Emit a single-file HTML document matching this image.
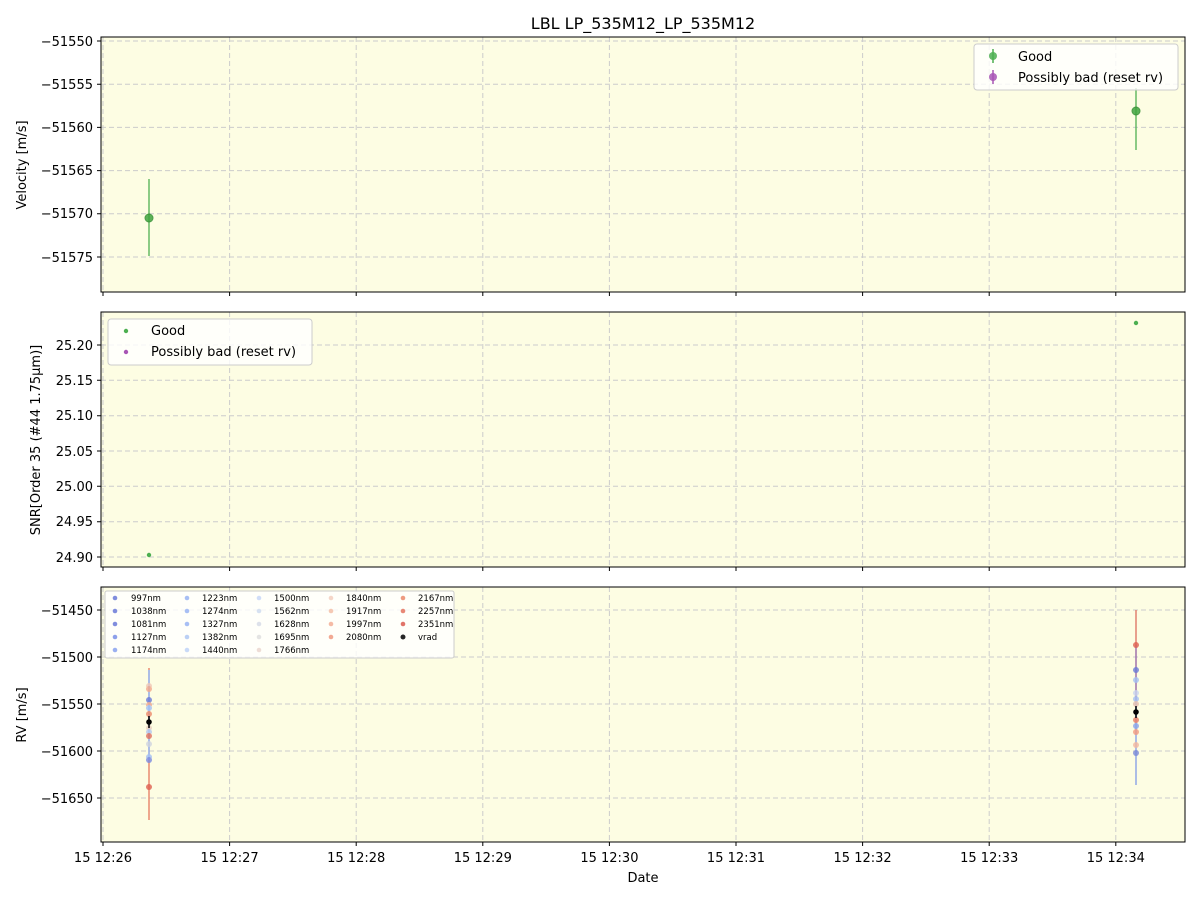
<!DOCTYPE html>
<html><head><meta charset="utf-8"><style>
body{margin:0;background:#fff}
svg{display:block;font-family:"DejaVu Sans","Liberation Sans",sans-serif}
</style></head><body>
<svg width="1200" height="900" viewBox="0 0 1200 900" xmlns="http://www.w3.org/2000/svg">
<rect width="1200" height="900" fill="#fff"/>
<text x="643" y="29" font-size="16" text-anchor="middle">LBL LP_535M12_LP_535M12</text>

<!-- panel backgrounds -->
<rect x="101" y="37" width="1084" height="255" fill="#fdfde3"/>
<rect x="101" y="312" width="1084" height="255" fill="#fdfde3"/>
<rect x="101" y="587" width="1084" height="255" fill="#fdfde3"/>

<g stroke="#cccccc" stroke-dasharray="5,3" stroke-width="1">
<!-- vertical grid -->
<path d="M103 37V292M229.6 37V292M356.2 37V292M482.8 37V292M609.4 37V292M736 37V292M862.6 37V292M989.2 37V292M1115.8 37V292"/>
<path d="M103 312V567M229.6 312V567M356.2 312V567M482.8 312V567M609.4 312V567M736 312V567M862.6 312V567M989.2 312V567M1115.8 312V567"/>
<path d="M103 587V842M229.6 587V842M356.2 587V842M482.8 587V842M609.4 587V842M736 587V842M862.6 587V842M989.2 587V842M1115.8 587V842"/>
<!-- horizontal grid -->
<path d="M101 41H1185M101 84.2H1185M101 127.4H1185M101 170.6H1185M101 213.8H1185M101 257H1185"/>
<path d="M101 345H1185M101 380.3H1185M101 415.7H1185M101 451H1185M101 486.3H1185M101 521.7H1185M101 557H1185"/>
<path d="M101 610H1185M101 657H1185M101 704H1185M101 751H1185M101 798H1185"/>
</g>

<!-- panel 1 data -->
<g stroke="#4caf50" stroke-width="1.5" opacity="0.85"><path d="M149 179V256M1136 88V150"/></g>
<circle cx="149" cy="218" r="4" fill="#3fa43f" stroke="#2e8b2e" opacity="0.85"/>
<circle cx="1136" cy="111" r="4" fill="#3fa43f" stroke="#2e8b2e" opacity="0.85"/>

<!-- panel 2 data -->
<circle cx="149" cy="555" r="2.2" fill="#4caf50"/>
<circle cx="1136" cy="323" r="2.2" fill="#4caf50"/>

<!-- panel 3 data -->
<g stroke-width="2" opacity="0.7">
<path d="M149 668V820" stroke="#e8836a"/>
<path d="M149 670V760" stroke="#8aa3e8"/>
<path d="M1136 610V720" stroke="#e07a6a"/>
<path d="M1136 700V785" stroke="#8aa3e8"/>
<path d="M1136 645V700" stroke="#9a6aa8"/>
</g>
<g opacity="0.8">
<circle cx="149" cy="686" r="3" fill="#f0c8b8"/>
<circle cx="149" cy="689" r="3" fill="#f4a88c"/>
<circle cx="149" cy="700" r="3" fill="#6a7ad8"/>
<circle cx="149" cy="705" r="3" fill="#f4a88c"/>
<circle cx="149" cy="708" r="3" fill="#a4c0f4"/>
<circle cx="149" cy="714" r="3" fill="#ec8a6c"/>
<circle cx="149" cy="728" r="3" fill="#e8cfc0"/>
<circle cx="149" cy="732" r="3" fill="#b4c8f0"/>
<circle cx="149" cy="736" r="3" fill="#e07060"/>
<circle cx="149" cy="744" r="3" fill="#cfd4e0"/>
<circle cx="149" cy="757" r="3" fill="#a4c0f4"/>
<circle cx="149" cy="760" r="3" fill="#7a8ae0"/>
<circle cx="149" cy="787" r="3" fill="#e06050"/>
<circle cx="1136" cy="645" r="3" fill="#e06050"/>
<circle cx="1136" cy="670" r="3" fill="#6a7ad8"/>
<circle cx="1136" cy="680" r="3" fill="#a4c0f4"/>
<circle cx="1136" cy="693" r="3" fill="#c8d4f0"/>
<circle cx="1136" cy="699" r="3" fill="#a4c0f4"/>
<circle cx="1136" cy="704" r="3" fill="#e8c0b0"/>
<circle cx="1136" cy="720" r="3" fill="#ec7a60"/>
<circle cx="1136" cy="726" r="3" fill="#8aa3e8"/>
<circle cx="1136" cy="732" r="3" fill="#f49a80"/>
<circle cx="1136" cy="745" r="3" fill="#f4b8a0"/>
<circle cx="1136" cy="753" r="3" fill="#7a8ad8"/>
</g>
<path d="M149 716V728M1136 706V718" stroke="#000" stroke-width="1.5"/>
<circle cx="149" cy="722" r="2.8" fill="#000"/>
<circle cx="1136" cy="712" r="2.8" fill="#000"/>

<!-- axes frames -->
<g fill="none" stroke="#000" stroke-width="1">
<rect x="101" y="37" width="1084" height="255"/>
<rect x="101" y="312" width="1084" height="255"/>
<rect x="101" y="587" width="1084" height="255"/>
</g>

<!-- ticks -->
<g stroke="#000" stroke-width="1">
<path d="M103 292v4M229.6 292v4M356.2 292v4M482.8 292v4M609.4 292v4M736 292v4M862.6 292v4M989.2 292v4M1115.8 292v4"/>
<path d="M103 567v4M229.6 567v4M356.2 567v4M482.8 567v4M609.4 567v4M736 567v4M862.6 567v4M989.2 567v4M1115.8 567v4"/>
<path d="M103 842v4M229.6 842v4M356.2 842v4M482.8 842v4M609.4 842v4M736 842v4M862.6 842v4M989.2 842v4M1115.8 842v4"/>
<path d="M97 41h4M97 84.2h4M97 127.4h4M97 170.6h4M97 213.8h4M97 257h4"/>
<path d="M97 345h4M97 380.3h4M97 415.7h4M97 451h4M97 486.3h4M97 521.7h4M97 557h4"/>
<path d="M97 610h4M97 657h4M97 704h4M97 751h4M97 798h4"/>
</g>

<g font-size="13" text-anchor="end">
<text x="93" y="46">−51550</text><text x="93" y="89">−51555</text><text x="93" y="132">−51560</text><text x="93" y="175">−51565</text><text x="93" y="218">−51570</text><text x="93" y="262">−51575</text>
<text x="93" y="350">25.20</text><text x="93" y="385">25.15</text><text x="93" y="420">25.10</text><text x="93" y="456">25.05</text><text x="93" y="491">25.00</text><text x="93" y="526">24.95</text><text x="93" y="562">24.90</text>
<text x="93" y="615">−51450</text><text x="93" y="662">−51500</text><text x="93" y="709">−51550</text><text x="93" y="756">−51600</text><text x="93" y="803">−51650</text>
</g>
<g font-size="13" text-anchor="middle">
<text x="103" y="862">15 12:26</text><text x="229.6" y="862">15 12:27</text><text x="356.2" y="862">15 12:28</text><text x="482.8" y="862">15 12:29</text><text x="609.4" y="862">15 12:30</text><text x="736" y="862">15 12:31</text><text x="862.6" y="862">15 12:32</text><text x="989.2" y="862">15 12:33</text><text x="1115.8" y="862">15 12:34</text>
<text x="643" y="882">Date</text>
</g>
<g font-size="13" text-anchor="middle">
<text transform="translate(26 165) rotate(-90)">Velocity [m/s]</text>
<text transform="translate(40 440) rotate(-90)">SNR[Order 35 (#44 1.75μm)]</text>
<text transform="translate(26 715) rotate(-90)">RV [m/s]</text>
</g>

<!-- legend 1 -->
<rect x="974" y="44" width="204" height="46" rx="3" fill="#fff" fill-opacity="0.8" stroke="#ccc"/>
<path d="M993 49v14" stroke="#4caf50" stroke-width="1.5"/><circle cx="993" cy="56" r="4" fill="#4caf50" opacity="0.85"/>
<path d="M993 70v14" stroke="#a855b5" stroke-width="1.5"/><circle cx="993" cy="77" r="4" fill="#a855b5" opacity="0.85"/>
<text x="1018" y="61" font-size="13">Good</text>
<text x="1018" y="82" font-size="13">Possibly bad (reset rv)</text>

<!-- legend 2 -->
<rect x="108" y="319" width="204" height="46" rx="3" fill="#fff" fill-opacity="0.8" stroke="#ccc"/>
<circle cx="126" cy="331" r="2.2" fill="#4caf50"/>
<circle cx="126" cy="352" r="2.2" fill="#a855b5"/>
<text x="151" y="335" font-size="13">Good</text>
<text x="151" y="356" font-size="13">Possibly bad (reset rv)</text>

<!-- legend 3 -->
<rect x="105" y="591" width="349" height="67" rx="2" fill="#fff" fill-opacity="0.8" stroke="#ccc"/>
<g font-size="8.5">
<g fill="#6a7ad8" opacity="0.85"><circle cx="115" cy="598" r="2.3"/><circle cx="115" cy="611" r="2.3"/><circle cx="115" cy="624" r="2.3"/><circle cx="115" cy="637" r="2.3" fill="#7a90e8"/><circle cx="115" cy="650" r="2.3" fill="#8aa3f0"/></g>
<text x="131" y="601">997nm</text><text x="131" y="614">1038nm</text><text x="131" y="627">1081nm</text><text x="131" y="640">1127nm</text><text x="131" y="653">1174nm</text>
<g fill="#9ab4f4" opacity="0.85"><circle cx="187" cy="598" r="2.3"/><circle cx="187" cy="611" r="2.3"/><circle cx="187" cy="624" r="2.3"/><circle cx="187" cy="637" r="2.3" fill="#b0c8f4"/><circle cx="187" cy="650" r="2.3" fill="#c0d4f8"/></g>
<text x="202" y="601">1223nm</text><text x="202" y="614">1274nm</text><text x="202" y="627">1327nm</text><text x="202" y="640">1382nm</text><text x="202" y="653">1440nm</text>
<g opacity="0.85"><circle cx="259" cy="598" r="2.3" fill="#c8d8f8"/><circle cx="259" cy="611" r="2.3" fill="#d0dcf0"/><circle cx="259" cy="624" r="2.3" fill="#d8dce8"/><circle cx="259" cy="637" r="2.3" fill="#e0e0e0"/><circle cx="259" cy="650" r="2.3" fill="#ecd8d0"/></g>
<text x="274" y="601">1500nm</text><text x="274" y="614">1562nm</text><text x="274" y="627">1628nm</text><text x="274" y="640">1695nm</text><text x="274" y="653">1766nm</text>
<g opacity="0.85"><circle cx="331" cy="598" r="2.3" fill="#f4d0c0"/><circle cx="331" cy="611" r="2.3" fill="#f4c0a8"/><circle cx="331" cy="624" r="2.3" fill="#f4b098"/><circle cx="331" cy="637" r="2.3" fill="#f09a80"/></g>
<text x="346" y="601">1840nm</text><text x="346" y="614">1917nm</text><text x="346" y="627">1997nm</text><text x="346" y="640">2080nm</text>
<g opacity="0.85"><circle cx="403" cy="598" r="2.3" fill="#ec8a6c"/><circle cx="403" cy="611" r="2.3" fill="#e47460"/><circle cx="403" cy="624" r="2.3" fill="#dc5c50"/><circle cx="403" cy="637" r="2.5" fill="#000"/></g>
<text x="418" y="601">2167nm</text><text x="418" y="614">2257nm</text><text x="418" y="627">2351nm</text><text x="418" y="640">vrad</text>
</g>
</svg>
</body></html>
